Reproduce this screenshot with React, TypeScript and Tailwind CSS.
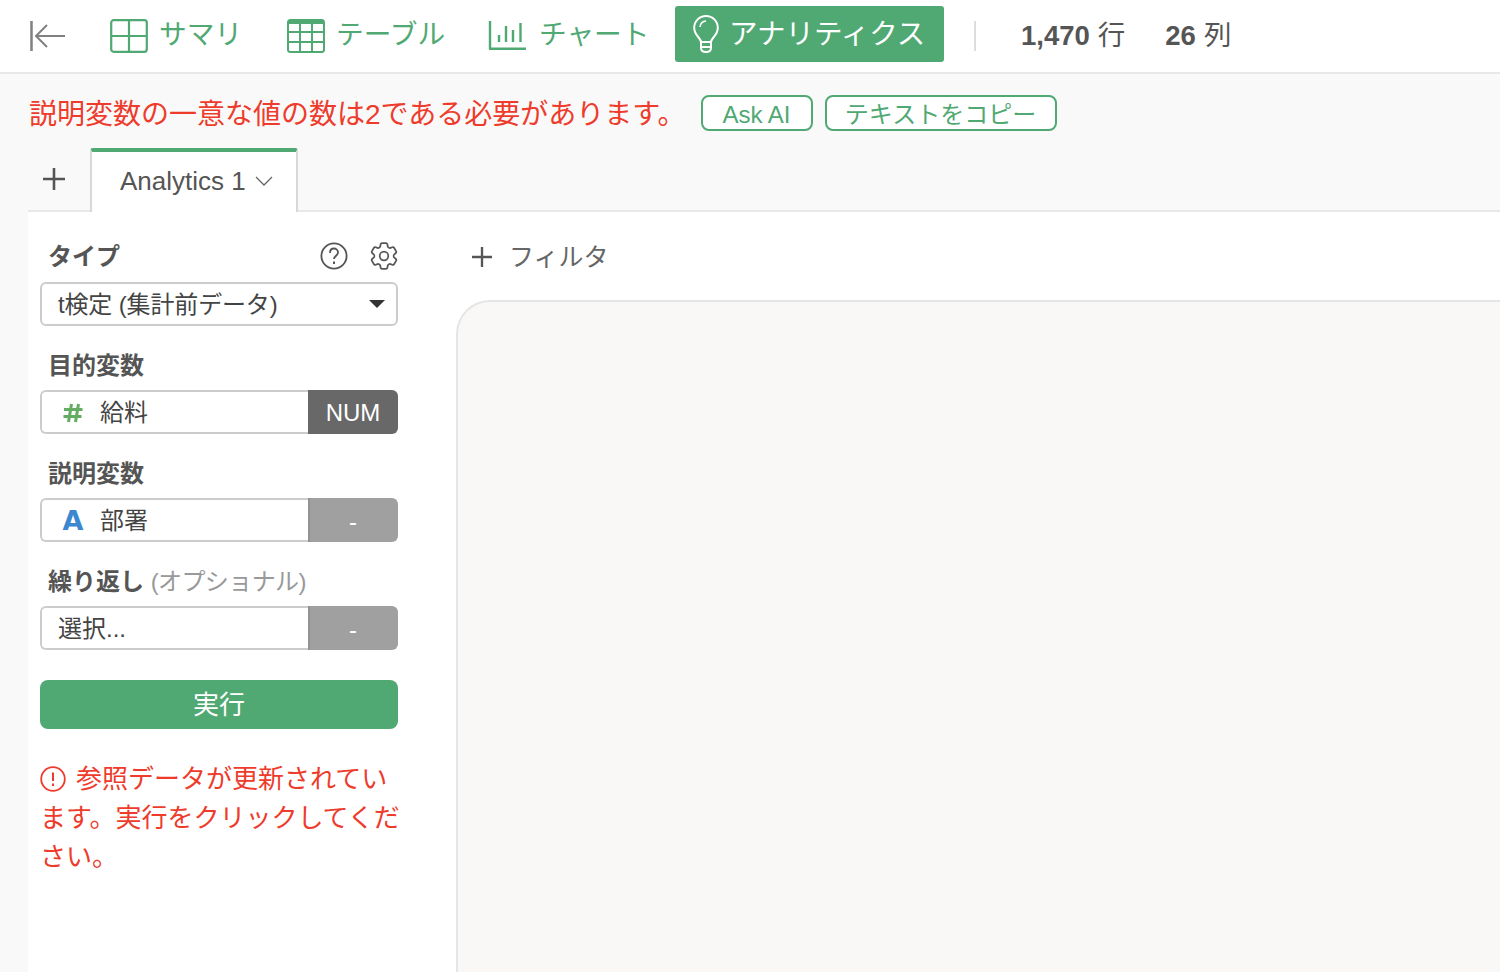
import React from "react";

const Chevron = () => (
  <svg width="18" height="10" viewBox="0 0 18 10" fill="none" stroke="#666" strokeWidth="1.3"><path d="M1 1l8 8 8-8" /></svg>
);

const Plus = ({ size, w }: { size: number; w: number }) => (
  <svg width={size} height={size} viewBox="0 0 24 24" stroke="#555" strokeWidth={w} fill="none"><path d="M12 0v24M0 12h24" /></svg>
);

function NavItem({ icon, label, className }: { icon: React.ReactNode; label: string; className: string }) {
  return (
    <div className={`flex items-center text-[#50a873] text-[27.700px] ${className}`}>
      {icon}
      <span className="pb-[2px]">{label}</span>
    </div>
  );
}

function Field({ icon, text, tag, tagClass }: { icon?: React.ReactNode; text: string; tag: string; tagClass: string }) {
  return (
    <div className="flex h-11 w-[358px]">
      <div className="flex flex-1 items-center border-2 border-r-0 border-[#cccccc] rounded-l-md bg-white pl-4 pt-[1px] text-[24px] text-[#444]">
        {icon}
        <span>{text}</span>
      </div>
      <div className={`flex w-[90px] items-center justify-center rounded-r-md text-[24px] text-white ${tagClass}`}>{tag}</div>
    </div>
  );
}

function Label({ children }: { children: React.ReactNode }) {
  return <div className="pl-2 text-[24px] leading-[32px] font-bold text-[#555]">{children}</div>;
}

export default function App() {
  return (
    <div
      className="flex h-[972px] w-[1500px] flex-col overflow-hidden bg-[#f9f9f9]"
      style={{ fontFamily: '"Liberation Sans", "Noto Sans CJK JP", sans-serif' }}
    >
      <header className="flex h-[74px] shrink-0 items-center border-b-2 border-[#e8e8e8] bg-white pl-[30px]">
        <svg width="36" height="30" viewBox="0 0 36 30" fill="none" stroke="#808080" strokeWidth="2" className="mr-[44px]">
          <path d="M1.500 0v30" strokeWidth="2.500" />
          <path d="M35 15H6M17 4L6 15l11 11" />
        </svg>
        <NavItem
          className="w-[177px]"
          label="サマリ"
          icon={
            <svg width="38" height="34" viewBox="0 0 38 34" fill="none" stroke="#50a873" strokeWidth="2.200" className="mr-[11px]">
              <rect x="1.200" y="1.200" width="35.600" height="31.600" rx="2.500" />
              <path d="M19 1v32M1 17h36" />
            </svg>
          }
        />
        <NavItem
          className="w-[202px]"
          label="テーブル"
          icon={
            <svg width="38" height="34" viewBox="0 0 38 34" fill="none" stroke="#50a873" strokeWidth="2" className="mr-[11px]">
              <rect x="1" y="1" width="36" height="32" rx="2.500" />
              <path d="M1 3h36" strokeWidth="4" />
              <path d="M13 3v30M25 3v30M1 13h36M1 23h36" />
            </svg>
          }
        />
        <NavItem
          className="w-[186px]"
          label="チャート"
          icon={
            <svg width="38" height="30" viewBox="0 0 38 30" fill="none" stroke="#50a873" className="-ml-px mr-[13px]">
              <path d="M2 0v28" strokeWidth="2.400" />
              <path d="M1 27.800h37" strokeWidth="2.400" />
              <path d="M11 14v7M18 5v16M25 9v12M32.500 2v19" strokeWidth="2.400" />
            </svg>
          }
        />
        <div className="mb-[4px] flex h-14 w-[269px] items-center rounded-[3px] bg-[#50a873] pl-[18px] text-[28.500px] text-white">
          <svg width="26" height="38" viewBox="0 0 26 38" fill="none" stroke="#fff" strokeWidth="2" className="mr-[10px]">
            <path d="M8 27c0-4-6.800-6.500-6.800-14C1.200 6 6.500 1 13 1s11.800 5 11.800 12c0 7.500-6.800 10-6.800 14z" />
            <path d="M7 12c0-3 2.500-6 6-6" strokeWidth="1.500" />
            <path d="M8 27h10v6q0 4-5 4t-5-4zM8 32h10" />
          </svg>
          <span className="pt-[1px]">アナリティクス</span>
        </div>
        <div className="ml-[30px] mr-[45px] h-[30px] w-0.5 bg-[#dddddd]" />
        <div className="flex items-baseline gap-[8px] text-[27.500px] text-[#555]">
          <b>1,470</b>
          <span>行</span>
        </div>
        <div className="ml-[40px] flex items-baseline gap-[8px] text-[27.500px] text-[#555]">
          <b>26</b>
          <span>列</span>
        </div>
      </header>

      <div className="flex h-[74px] shrink-0 items-center pl-[29px] pt-[4px]">
        <span className="pt-[4px] text-[28px] text-[#ee3b2b]">説明変数の一意な値の数は2である必要があります。</span>
        <button className="ml-[15px] h-9 w-28 rounded-lg border-2 border-[#50a873] bg-white pb-[4px] text-[24px] text-[#50a873]">Ask AI</button>
        <button className="ml-[12px] h-9 w-[232px] rounded-lg border-2 border-[#50a873] bg-white pb-[4px] text-[24px] text-[#50a873]">テキストをコピー</button>
      </div>

      <div className="ml-[28px] flex h-[64px] shrink-0 border-b-2 border-[#e8e8e8]">
        <div className="flex w-[63px] items-center pl-[15px]">
          <Plus size={22} w={2.8} />
        </div>
        <div className="-mb-[2px] -ml-px flex h-[64px] w-[208px] items-center rounded-t-[3px] border-x-2 border-t-4 border-[#d8d8d8] border-t-[#50a873] bg-white pb-[2px] pl-[28px] text-[26px] text-[#555]">
          <span>Analytics 1</span>
          <span className="ml-[9px]"><Chevron /></span>
        </div>
      </div>

      <div className="ml-[28px] flex min-h-0 flex-1 bg-white">
        <aside className="w-[428px] shrink-0 pl-3 pt-[28px]">
          <div className="flex h-8 w-[358px] items-center justify-between">
            <div className="pt-[1px]"><Label>タイプ</Label></div>
            <div className="flex items-center gap-[22px]">
              <svg width="28" height="28" viewBox="0 0 28 28" fill="none" stroke="#555" strokeWidth="1.800">
                <circle cx="14" cy="14" r="12.600" />
                <path d="M10 11c0-3 2-4.500 4-4.500s4 1.500 4 4c0 3-4 3.500-4 6.500" />
                <path d="M14 19.500v2.500" strokeWidth="2" />
              </svg>
              <svg width="28" height="28" viewBox="2.200 2.200 19.600 19.600" fill="none" stroke="#555" strokeWidth="1.200" strokeLinecap="round" strokeLinejoin="round">
                <path d="M9.594 3.940c.09-.542.56-.940 1.110-.940h2.593c.550 0 1.020.398 1.110.940l.213 1.281c.063.374.313.686.645.870.074.040.147.083.220.127.325.196.720.257 1.075.124l1.217-.456a1.125 1.125 0 0 1 1.370.490l1.296 2.247a1.125 1.125 0 0 1-.260 1.431l-1.003.827c-.293.241-.438.613-.430.992a7.723 7.723 0 0 1 0 .255c-.008.378.137.750.430.991l1.004.827c.424.350.534.955.260 1.430l-1.298 2.247a1.125 1.125 0 0 1-1.369.491l-1.217-.456c-.355-.133-.750-.072-1.076.124a6.470 6.470 0 0 1-.220.128c-.331.183-.581.495-.644.869l-.213 1.281c-.090.543-.560.940-1.110.940h-2.594c-.550 0-1.019-.398-1.110-.940l-.213-1.281c-.062-.374-.312-.686-.644-.870a6.520 6.520 0 0 1-.220-.127c-.325-.196-.720-.257-1.076-.124l-1.217.456a1.125 1.125 0 0 1-1.369-.490l-1.297-2.247a1.125 1.125 0 0 1 .260-1.431l1.004-.827c.292-.240.437-.613.430-.991a6.932 6.932 0 0 1 0-.255c.007-.380-.138-.751-.430-.992l-1.004-.827a1.125 1.125 0 0 1-.260-1.430l1.297-2.247a1.125 1.125 0 0 1 1.370-.491l1.216.456c.356.133.751.072 1.076-.124.072-.044.146-.086.220-.128.332-.183.582-.495.644-.869l.214-1.280Z" />
                <path d="M15 12a3 3 0 1 1-6 0 3 3 0 0 1 6 0Z" />
              </svg>
            </div>
          </div>
          <div className="mt-[10px] flex h-11 w-[358px] items-center justify-between rounded-md border-2 border-[#cccccc] bg-white pl-4 pr-[11px] text-[24px] text-[#444]">
            <span className="pt-[1px] tracking-[-0.15px]">t検定 (集計前データ)</span>
            <svg width="16" height="8" viewBox="0 0 16 8" fill="#333"><path d="M0 0h16L8 8z" /></svg>
          </div>

          <div className="mt-[24px]"><Label>目的変数</Label></div>
          <div className="mt-[8px]">
            <Field
              text="給料"
              tag="NUM"
              tagClass="bg-[#686868] pt-[1px]"
              icon={
                <span className="mr-[12px] flex w-[30px] justify-center">
                  <svg width="20" height="20" viewBox="0 0 20 20" fill="none" stroke="#62ad62" strokeWidth="3">
                    <path d="M8.500 1L5.500 19M15.500 1L12.500 19M1 6.500h18.500M0.500 13.500h18" />
                  </svg>
                </span>
              }
            />
          </div>

          <div className="mt-[24px]"><Label>説明変数</Label></div>
          <div className="mt-[8px]">
            <Field
              text="部署"
              tag="-"
              tagClass="bg-[#a0a0a0] border-l-2 border-[#929292] pt-[3px] pr-[2px]"
              icon={
                <span className="mr-[12px] w-[30px] text-center text-[27px] leading-none font-bold text-[#3d87d0]" style={{ fontFamily: '"DejaVu Sans", sans-serif' }}>
                  A
                </span>
              }
            />
          </div>

          <div className="mt-[24px] pl-2 text-[24px] leading-[32px] text-[#999]">
            <b className="text-[#555]">繰り返し</b> <span className="tracking-[-0.6px]">(オプショナル)</span>
          </div>
          <div className="mt-[8px]">
            <Field text="選択..." tag="-" tagClass="bg-[#a0a0a0] border-l-2 border-[#929292] pt-[3px] pr-[2px]" />
          </div>

          <button className="mt-[30px] h-[49px] w-[358px] rounded-lg bg-[#50a873] pt-[1px] text-[26px] text-white">実行</button>

          <div className="mt-[31px] w-[360px] text-[26px] leading-[39px] text-[#ee3b2b]">
            <svg width="26" height="26" viewBox="0 0 26 26" fill="none" stroke="#ee3b2b" strokeWidth="1.800" className="mr-[10px] inline-block align-[-4px]">
              <circle cx="13" cy="13" r="11.800" />
              <path d="M13 6.500v8.500M13 17.500v2.500" strokeWidth="2" />
            </svg>
            参照データが更新されています。実行をクリックしてください。
          </div>
        </aside>

        <main className="flex min-w-0 flex-1 flex-col">
          <div className="flex h-[88px] shrink-0 items-center pl-[15px] pt-[2px] text-[25px] text-[#666]">
            <span className="ml-px"><Plus size={20} w={2.8} /></span>
            <span className="ml-[17px] pt-[2px]">フィルタ</span>
          </div>
          <div className="flex-1 rounded-tl-[34px] border-l-2 border-t-2 border-[#e5e5e5] bg-[#f9f8f7]" />
        </main>
      </div>
    </div>
  );
}
